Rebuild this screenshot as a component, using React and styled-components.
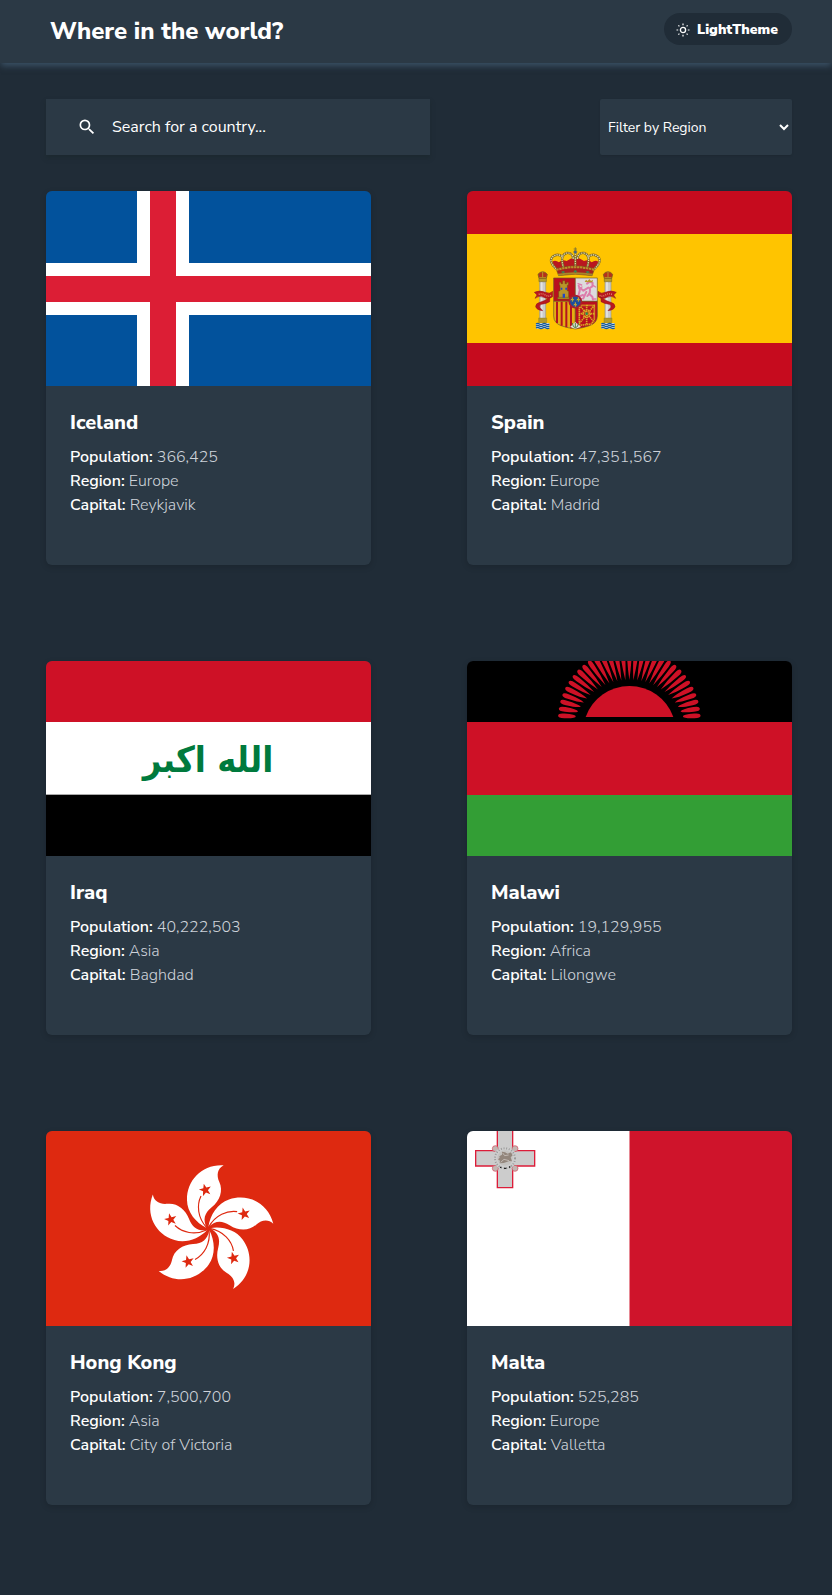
import React from "react";
import styled, { createGlobalStyle } from "styled-components";
import { MdSearch } from "react-icons/md";

const colors = {
  page: "#202c37",
  panel: "#2b3945",
  text: "#ffffff",
  muted: "#ced3da",
};

const GlobalStyle = createGlobalStyle`
  *, *::before, *::after { box-sizing: border-box; }
  body {
    margin: 0;
    background: ${colors.page};
    color: ${colors.text};
    font-family: "Nunito Sans", Lato, sans-serif;
    font-size: 16px;
    line-height: 24px;
  }
`;

const Header = styled.header`
  display: flex;
  align-items: flex-start;
  justify-content: space-between;
  height: 63px;
  padding: 13px 40px 0 50px;
  background: ${colors.panel};
  box-shadow: 0 4px 6px -1px #3a5064;
`;

const SiteTitle = styled.h1`
  margin: 0;
  font-size: 24px;
  font-weight: 800;
  line-height: 36px;
`;

const ThemeButton = styled.button`
  display: flex;
  align-items: center;
  gap: 7px;
  min-width: 128px;
  height: 32px;
  padding: 2px 12px 0;
  border: 0;
  border-radius: 16px;
  background: ${colors.page};
  color: inherit;
  font: inherit;
  font-size: 14px;
  font-weight: 900;
  cursor: pointer;
`;

const Main = styled.main`
  padding: 36px 40px 90px 46px;
`;

const Toolbar = styled.div`
  display: flex;
  justify-content: space-between;
  gap: 24px;
  margin-bottom: 36px;
`;

const SearchBox = styled.label`
  display: flex;
  align-items: center;
  gap: 15px;
  flex: 0 1 384px;
  height: 56px;
  padding: 0 31px;
  background: ${colors.panel};
  box-shadow: 0 3px 4px rgba(28, 40, 46, 0.8);
`;

const SearchInput = styled.input`
  flex: 1;
  min-width: 0;
  padding: 0;
  border: 0;
  outline: 0;
  background: transparent;
  color: inherit;
  font: inherit;
  &::placeholder { color: ${colors.text}; opacity: 1; }
`;

const RegionSelect = styled.select`
  flex: 0 0 192px;
  height: 56px;
  padding: 0 4px;
  border: 0;
  border-radius: 2px;
  background: ${colors.panel};
  color: inherit;
  font: inherit;
  font-size: 14px;
  box-shadow: 0 1px 2px rgba(0, 0, 0, 0.1);
`;

const CardGrid = styled.div`
  display: grid;
  grid-template-columns: repeat(2, minmax(0, 1fr));
  gap: 96px;
`;

const Card = styled.article`
  overflow: hidden;
  border-radius: 6px;
  background: ${colors.panel};
  box-shadow: 0 2px 6px rgba(0, 0, 0, 0.16);
`;

const FlagSvg = styled.svg`
  display: block;
  width: 100%;
  aspect-ratio: 5 / 3;
`;

const CardBody = styled.div`
  padding: 24px 24px 48px;
`;

const CountryName = styled.h2`
  margin: 0 0 9px;
  font-size: 20px;
  font-weight: 800;
  line-height: 26px;
`;

const Fact = styled.p`
  margin: 0;
  color: ${colors.muted};
  font-weight: 300;
`;

const FactLabel = styled.b`
  color: ${colors.text};
  font-weight: 600;
`;

function SunIcon() {
  return (
    <svg width="14" height="14" viewBox="0 0 14 14" fill="none" stroke="currentColor" aria-hidden="true">
      <circle cx="7" cy="7" r="2.600" strokeWidth="1.300" />
      <path
        d="M7 .5v1.700M7 11.800v1.700M.5 7h1.700M11.800 7h1.700M2.400 2.400l1 1M10.600 10.600l1 1M2.400 11.600l1-1M10.600 3.400l1-1"
        strokeWidth="1.200"
      />
    </svg>
  );
}

function Flag({ name, children }) {
  return (
    <FlagSvg viewBox="0 0 325 195" preserveAspectRatio="xMidYMid slice" role="img" aria-label={`Flag of ${name}`}>
      {children}
    </FlagSvg>
  );
}

function Iceland() {
  return (
    <Flag name="Iceland">
      <rect width="325" height="195" fill="#02529c" />
      <path d="M91 0h52v195H91zM0 72h325v52H0z" fill="#fff" />
      <path d="M104 0h26v195h-26zM0 85h325v26H0z" fill="#dc1e35" />
    </Flag>
  );
}

function Pillar({ x }) {
  return (
    <g transform={`translate(${x} 0)`}>
      <path d="M-11 130h22v10h-22z" fill="#b19a2c" stroke="#7d6c22" strokeWidth="2" />
      <path d="M-9 141H9v112H-9z" fill="#cbcbcb" stroke="#96958c" strokeWidth="2" />
      <path d="M-3 142v110" stroke="#e4e4e4" strokeWidth="5" />
      <path d="M-12 249h24v14h-24z" fill="#b19a2c" stroke="#7d6c22" strokeWidth="1" />
      <path d="M-20 264h40v17h-40z" fill="#c9d6de" />
      <path d="M-20 267q5-4 10 0t10 0 10 0 10 0M-20 273q5-4 10 0t10 0 10 0 10 0M-20 279q5-4 10 0t10 0 10 0 10 0" fill="none" stroke="#14599b" strokeWidth="3.500" />
      <path d="M-11 130l-3-12q5-7 14-8 9 1 14 8l-3 12z" fill="#b4311c" stroke="#7d641c" strokeWidth="2.500" />
      <path d="M-10 128h20M0 109v18" stroke="#b8952a" strokeWidth="3" />
    </g>
  );
}

function Spain() {
  return (
    <Flag name="Spain">
      <rect width="325" height="195" fill="#c60b1e" />
      <rect y="43" width="325" height="109" fill="#ffc400" />
      <g transform="translate(53 44) scale(.33333)">
        <Pillar x="68" />
        <Pillar x="264" />
        <g fill="#b9171f" stroke="#8c1520" strokeWidth="1.500">
          <path d="M43 172q16-8 33 0 14 6 22-3v16q-12 10-27 2-14-7-26 3l6-10z" />
          <path d="M89 186v14q-10 6-24 8-9 3-5 10l8 9q-18-2-21-12-1-10 15-14 15-3 27-15z" />
          <path d="M289 172q-16-8-33 0-14 6-22-3v16q12 10 27 2 14-7 26 3l-6-10z" />
          <path d="M243 186v14q10 6 24 8 9 3 5 10l-8 9q18-2 21-12 1-10-15-14-15-3-27-15z" />
        </g>
        <path d="M56 178q10-4 20 2t17 1M276 178q-10-4-20 2t-17 1" fill="none" stroke="#d98c6c" strokeWidth="4" strokeDasharray="3 3" />
        <g stroke="#6a5b2a" strokeWidth="2">
          <path d="M101 129h65v70h-65z" fill="#b9101f" />
          <path d="M166 129h66v70h-66z" fill="#dddbdd" />
          <path d="M101 199h65v83q-22-3-40-9-25-8-25-30z" fill="#e6ac12" />
          <path d="M232 199h-66v83q22-3 40-9 26-8 26-30z" fill="#b9101f" />
        </g>
        <path d="M111 200v64M125 200v72M139 200v77M153 200v80" stroke="#b3151f" strokeWidth="6" />
        <g fill="#b8952a" stroke="#6b5210" strokeWidth="1.500">
          <path d="M118 151v-9h5v4h5v-9h7v9h5v-4h5v9h-3v17h4v21h-30v-21h4v-17z" />
          <path d="M113 187h35v5h-35z" />
        </g>
        <path d="M128 176h7v12h-7zM122 158h5v6h-5zM136 158h5v6h-5z" fill="#2148c8" />
        <g fill="none" stroke="#dd7cab" strokeLinecap="round" strokeLinejoin="round">
          <path d="M201 146l8-6 9 4-1 10-8 5q4 15-7 24M205 158l-15 9-9-8M199 171l-9 19M207 176l10 9 2 9M189 180q-17 8-12-5 5-10-1-23" strokeWidth="6" />
          <path d="M174 146l11 4M178 160l8-4M190 191h-10M220 192h8M219 151l8 5" strokeWidth="4" />
        </g>
        <path d="M194 141l4-7 5 4 5-6 5 6 6-4-2 8z" fill="#b8952a" />
        <g fill="none" stroke="#d9ae22" strokeWidth="5" strokeDasharray="4 2">
          <circle cx="200" cy="236" r="11" />
          <path d="M178 211h45v42l-9 14-36 4zM178 211l45 50M223 211l-45 54M200 209v62M176 236h49" />
        </g>
        <circle cx="200" cy="236" r="4" fill="#2e8a50" />
        <path d="M150 276l16-15 17 15-17 5z" fill="#dce2d6" />
        <path d="M157 264q2 15 9 14 7 1 10-14M166 264v14" fill="none" stroke="#547d48" strokeWidth="3" />
        <circle cx="166" cy="200" r="18" fill="#1b4f9b" stroke="#a8202d" strokeWidth="5" />
        <path d="M157 187v13M152 195q5-5 10 0M175 187v13M170 195q5-5 10 0M166 202v13M161 210q5-5 10 0" fill="none" stroke="#d4ae2a" strokeWidth="3" />
        <path d="M110 101q-10-10-13-21 9-6 20 2 9-10 23-4 13-10 26-10t26 10q14-6 23 4 11-8 20-2-3 11-13 21-56-15-112 0z" fill="#b9171f" />
        <g fill="none" stroke="#7d6c2a" strokeWidth="7">
          <path d="M109 102Q84 79 98 65q16-12 31 2M131 99q-13-39 9-45 17-2 20 18M223 102q25-23 11-37-16-12-31 2M201 99q13-39-9-45-17-2-20 18M166 56v42" />
        </g>
        <g fill="none" stroke="#e8dfb4" strokeWidth="3.500" strokeDasharray="4 3">
          <path d="M109 102Q84 79 98 65q16-12 31 2M131 99q-13-39 9-45 17-2 20 18M223 102q25-23 11-37-16-12-31 2M201 99q13-39-9-45-17-2-20 18M166 56v42" />
        </g>
        <path d="M108 101q58-17 116 0l-8 21q-50-9-100 0z" fill="#a52220" stroke="#77601d" strokeWidth="2" />
        <path d="M109 105q57-17 114 0" fill="none" stroke="#b8952a" strokeWidth="6" strokeDasharray="7 2" />
        <path d="M114 119q52-9 104 0" fill="none" stroke="#a5882a" strokeWidth="6" />
        <path d="M123 110l8-2 5 4-8 3zM160 109l6-4 6 4-6 5zM196 110l8-2 6 4-8 3z" fill="#3d8552" />
        <circle cx="166" cy="51" r="5" fill="#2d609b" stroke="#a58a26" strokeWidth="2" />
        <path d="M166 37v12M161 42h10" stroke="#8a7a31" strokeWidth="3" />
      </g>
    </Flag>
  );
}

function Iraq() {
  return (
    <Flag name="Iraq">
      <rect width="325" height="61" fill="#ce1126" />
      <rect y="61" width="325" height="73" fill="#fff" />
      <rect y="133" width="325" height="1" fill="#aaa" />
      <rect y="134" width="325" height="61" fill="#000" />
      <text
        x="162"
        y="111"
        textAnchor="middle"
        direction="rtl"
        fill="#007a3d"
        fontFamily='"DejaVu Sans Condensed", "DejaVu Sans", sans-serif'
        fontSize="36"
        fontWeight="700"
      >
        الله اكبر
      </text>
    </Flag>
  );
}

const MALAWI_RAYS = Array.from({ length: 31 }, (_, i) => (i - 15) * 5.8);

function Malawi() {
  return (
    <Flag name="Malawi">
      <rect width="325" height="61" fill="#000" />
      <rect y="61" width="325" height="73" fill="#ce1126" />
      <rect y="134" width="325" height="61" fill="#339e35" />
      <g transform="translate(73 -6) scale(.33333)" fill="#ce1126">
        {MALAWI_RAYS.map((angle) => {
          const inner = 118 + 46 * Math.pow(Math.abs(angle) / 90, 2);
          return (
            <path
              key={angle}
              transform={`translate(268 193) rotate(${angle})`}
              d={`M0 ${-inner}Q-6 -160 -7 -195Q-8 -214 0 -214Q8 -214 7 -195Q6 -160 0 ${-inner}Z`}
            />
          );
        })}
        <path d="M137 186A139.500 139.500 0 0 1 400 186z" />
      </g>
    </Flag>
  );
}

const PETALS = [0, 72, 144, 216, 288];

function HongKong() {
  return (
    <Flag name="Hong Kong">
      <rect width="325" height="195" fill="#de2910" />
      <g transform="translate(94 19) scale(.33333)">
        {PETALS.map((angle) => (
          <g key={angle} transform={`rotate(${angle} 205 236)`}>
            <path
              d="M251 46C232 56 229 76 238 96C250 122 240 152 215 172C193 190 188 208 200 234C168 219 141 186 141 150C140 90 187 42 251 46z"
              fill="#fff"
            />
            <path d="M183 138C170 165 172 203 201 234" fill="none" stroke="#de2910" strokeWidth="3.500" />
            <path
              transform="translate(196 120) rotate(-14) scale(1.150)"
              d="M0-17L4-5.500 16-5.300 6.500 2 10 14 0 7-10 14-6.500 2-16-5.300-4-5.500z"
              fill="#de2910"
            />
          </g>
        ))}
      </g>
    </Flag>
  );
}

function Malta() {
  return (
    <Flag name="Malta">
      <rect width="163" height="195" fill="#fff" />
      <rect x="162.500" width="162.500" height="195" fill="#cf142b" />
      <g transform="translate(-7 -6) scale(.33333)">
        <path d="M112 0h46v77h66v46h-66v65h-46v-65H47V77h65z" fill="#ccc" stroke="#dc1d39" strokeWidth="4" />
        <g fill="#c2b6b2" stroke="#d5475a" strokeWidth="2">
          <circle cx="106" cy="71" r="9" />
          <circle cx="165" cy="71" r="9" />
          <circle cx="106" cy="130" r="9" />
          <circle cx="165" cy="130" r="9" />
        </g>
        <circle cx="135" cy="100" r="35" fill="#cdcdcd" />
        <circle cx="135" cy="100" r="30" fill="none" stroke="#9a9a9a" strokeWidth="6" strokeDasharray="3 5" />
        <circle cx="135" cy="99" r="23" fill="#c4c2bf" />
        <path
          d="M118 94l8-5 0-9 9 2 8 4 10-4 5 9-6 6 4 12-8-1-8 3-9 3-12 1 1-8-6-4 5-5z"
          fill="#93867c"
        />
        <path d="M128 84l6 8 12-2M122 112l10-9 15 4" fill="none" stroke="#d8d2cd" strokeWidth="2" />
        <path d="M120 127h4M132 130h7M147 126h4" stroke="#222" strokeWidth="4" />
      </g>
    </Flag>
  );
}

const COUNTRIES = [
  { name: "Iceland", population: "366,425", region: "Europe", capital: "Reykjavik", FlagArt: Iceland },
  { name: "Spain", population: "47,351,567", region: "Europe", capital: "Madrid", FlagArt: Spain },
  { name: "Iraq", population: "40,222,503", region: "Asia", capital: "Baghdad", FlagArt: Iraq },
  { name: "Malawi", population: "19,129,955", region: "Africa", capital: "Lilongwe", FlagArt: Malawi },
  { name: "Hong Kong", population: "7,500,700", region: "Asia", capital: "City of Victoria", FlagArt: HongKong },
  { name: "Malta", population: "525,285", region: "Europe", capital: "Valletta", FlagArt: Malta },
];

function CountryCard({ name, population, region, capital, FlagArt }) {
  return (
    <Card>
      <FlagArt />
      <CardBody>
        <CountryName>{name}</CountryName>
        <Fact><FactLabel>Population:</FactLabel> {population}</Fact>
        <Fact><FactLabel>Region:</FactLabel> {region}</Fact>
        <Fact><FactLabel>Capital:</FactLabel> {capital}</Fact>
      </CardBody>
    </Card>
  );
}

export default function App() {
  return (
    <>
      <GlobalStyle />
      <Header>
        <SiteTitle>Where in the world?</SiteTitle>
        <ThemeButton type="button">
          <SunIcon />
          LightTheme
        </ThemeButton>
      </Header>
      <Main>
        <Toolbar>
          <SearchBox>
            <MdSearch size={20} aria-hidden="true" />
            <SearchInput type="text" aria-label="Search for a country" placeholder="Search for a country..." />
          </SearchBox>
          <RegionSelect aria-label="Filter by Region" defaultValue="">
            <option value="">Filter by Region</option>
            <option>Africa</option>
            <option>Americas</option>
            <option>Asia</option>
            <option>Europe</option>
            <option>Oceania</option>
          </RegionSelect>
        </Toolbar>
        <CardGrid>
          {COUNTRIES.map((country) => (
            <CountryCard key={country.name} {...country} />
          ))}
        </CardGrid>
      </Main>
    </>
  );
}
